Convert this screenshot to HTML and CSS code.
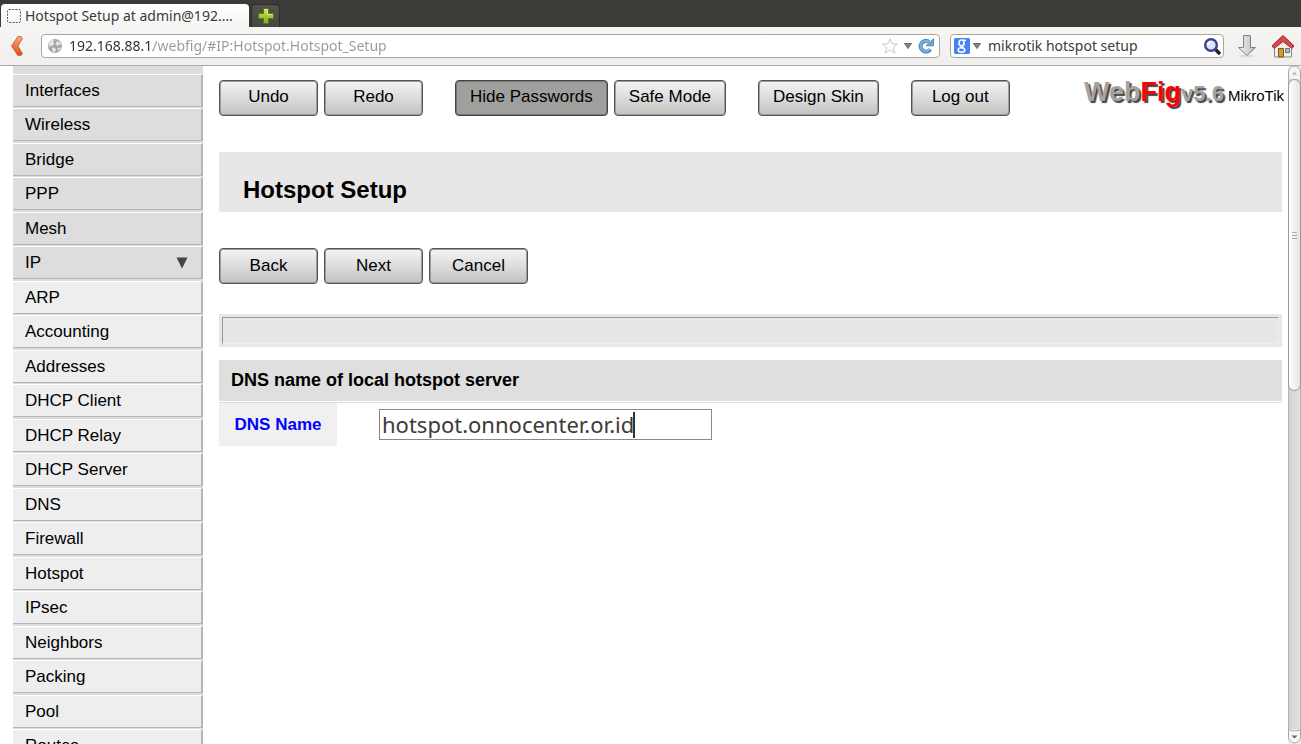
FILE: index.html
```html
<!DOCTYPE html>
<html lang="en">
<head>
<meta charset="utf-8">
<title>Hotspot Setup at admin@192.168.88.1</title>
<link rel="stylesheet" href="styles.css">
</head>
<body>
<div class="browser">
  <div class="tabs">
    <button class="tab" type="button">
      <svg width="14" height="14" viewBox="0 0 14 14"><rect x=".5" y=".5" width="13" height="13" rx="1.5" fill="none" stroke="#555" stroke-dasharray="2 1.2"/></svg>
      <span>Hotspot Setup at admin@192.…</span>
    </button>
    <button class="new-tab" type="button" aria-label="New tab">
      <svg width="16" height="16" viewBox="0 0 16 16"><defs><linearGradient id="plus" x2="0" y2="1"><stop stop-color="#d3e25c"/><stop offset="1" stop-color="#7fae1c"/></linearGradient></defs><path d="M5.5 .5h5v5h5v5h-5v5h-5v-5h-5v-5h5z" fill="url(#plus)" stroke="#4e7d12"/><path d="M6.5 1.5h3v5h5" fill="none" stroke="#eaf3a0" stroke-opacity=".8"/></svg>
    </button>
  </div>
  <div class="toolbar">
    <button class="tool back" type="button" aria-label="Go back">
      <svg width="14" height="22" viewBox="0 0 14 22"><defs><linearGradient id="arrow" x2="0" y2="1"><stop stop-color="#f7ad72"/><stop offset="1" stop-color="#e04a1c"/></linearGradient></defs><path d="M7.8 1.5 1.5 11l6.300 9.500h3.200l1.500-1.800L8 11l4.500-7.700L11 1.500z" fill="url(#arrow)" stroke="#c9592c" stroke-width=".8"/></svg>
    </button>
    <div class="field address">
      <svg width="16" height="16" viewBox="0 0 16 16"><circle cx="8" cy="8" r="7" fill="#a5a5a5"/><path d="M2 5 4.500 2l3 .2L6 4l1.500 1.500L5.500 8 4 7.500 2 9zM10 3l3 1 1.500 3-2.500-.5-1.500 1.500-2-2zM5 9.500l3 .5 1 1.500-1.500 3-2-1zM10.500 10l2.500-.5 1 1-2.500 2.500z" fill="#e4e4e4"/></svg>
      <input class="text url" type="text" aria-label="Address" value="192.168.88.1/webfig/#IP:Hotspot.Hotspot_Setup">
      <svg width="16" height="16" viewBox="0 0 16 16"><path d="m8 .8 2.100 5 5.400.3-4.200 3.500 1.400 5.400L8 12l-4.700 3 1.400-5.400L.5 6.100l5.400-.3z" fill="#fff" stroke="#c8c8c8"/></svg>
      <svg class="down" width="8" height="6" viewBox="0 0 8 6"><path d="M.5.5h7L4 5.500z" fill="#888" stroke="#666"/></svg>
      <svg width="16" height="16" viewBox="0 0 16 16"><path d="M12.300 11.300A5.300 5.300 0 1 1 11 3.900" fill="none" stroke="#3f7fb6" stroke-width="4"/><path d="M15.500.7v7.100H8z" fill="#6fa8d8" stroke="#3f7fb6" stroke-width=".8"/><path d="M12 11.200A5.200 5.200 0 1 1 10.900 4" fill="none" stroke="#7db2df" stroke-width="2.200"/></svg>
    </div>
    <div class="field search">
      <svg width="16" height="16" viewBox="0 0 16 16"><rect width="16" height="16" rx="1.500" fill="#4683f5"/><ellipse cx="7.500" cy="5" rx="2.500" ry="3" fill="none" stroke="#fff" stroke-width="1.700"/><path d="M9 2.200h3M8 8c-2 1 .5 1.700 2 2.500" fill="none" stroke="#fff" stroke-width="1.500"/><ellipse cx="7.500" cy="12" rx="3.300" ry="2.200" fill="none" stroke="#fff" stroke-width="1.500"/></svg>
      <svg class="down" width="8" height="6" viewBox="0 0 8 6"><path d="M.5.5h7L4 5.500z" fill="#888" stroke="#666"/></svg>
      <input class="text" type="text" aria-label="Search" value="mikrotik hotspot setup">
      <svg width="18" height="18" viewBox="0 0 18 18"><path d="m12.500 12.500 3.500 3.500" stroke="#222" stroke-width="3.500" stroke-linecap="round"/><circle cx="8" cy="8" r="5.800" fill="#dfe6fb" stroke="#36448e" stroke-width="2.400"/><path d="M5 8a3 3 0 0 1 3-3" stroke="#fff" stroke-width="1.500" fill="none"/></svg>
    </div>
    <button class="tool download" type="button" aria-label="Downloads">
      <svg width="20" height="24" viewBox="0 0 20 24"><defs><linearGradient id="dl" x2="1" y2="0"><stop stop-color="#f2f4f4"/><stop offset="1" stop-color="#b4babc"/></linearGradient></defs><ellipse cx="10" cy="22" rx="8" ry="1.500" fill="#dcdcda"/><path d="M6.500 1.500h7v12h5L10 21.500l-8.500-8h5z" fill="url(#dl)" stroke="#7f8587"/></svg>
    </button>
    <button class="tool home" type="button" aria-label="Home">
      <svg width="24" height="24" viewBox="0 0 24 24"><path d="M3.500 11v12h17V11L12 4z" fill="#f1f0e8" stroke="#8a8a82"/><path d="m12 1.500 11 10.300-2 2.700-9-7-9 7-2-2.700z" fill="#d9474b" stroke="#a32b2e"/><path d="M7.500 14.500h5V23h-5z" fill="#d79a2b" stroke="#7c5718"/><path d="M14.500 14.500h4v4h-4z" fill="#a9bdc9" stroke="#66757d"/></svg>
    </button>
  </div>
  <div class="page">
    <nav class="sidebar" aria-label="Menu">
      <ul>
        <li><a href="#interfaces">Interfaces</a></li>
        <li><a href="#wireless">Wireless</a></li>
        <li><a href="#bridge">Bridge</a></li>
        <li><a href="#ppp">PPP</a></li>
        <li><a href="#mesh">Mesh</a></li>
        <li><a href="#ip">IP <svg width="12" height="12" viewBox="0 0 12 12"><path d="M.5.5h11L6 11.500z" fill="#444"/></svg></a></li>
        <li class="sub"><a href="#arp">ARP</a></li>
        <li class="sub"><a href="#accounting">Accounting</a></li>
        <li class="sub"><a href="#addresses">Addresses</a></li>
        <li class="sub"><a href="#dhcp-client">DHCP Client</a></li>
        <li class="sub"><a href="#dhcp-relay">DHCP Relay</a></li>
        <li class="sub"><a href="#dhcp-server">DHCP Server</a></li>
        <li class="sub"><a href="#dns">DNS</a></li>
        <li class="sub"><a href="#firewall">Firewall</a></li>
        <li class="sub"><a href="#hotspot">Hotspot</a></li>
        <li class="sub"><a href="#ipsec">IPsec</a></li>
        <li class="sub"><a href="#neighbors">Neighbors</a></li>
        <li class="sub"><a href="#packing">Packing</a></li>
        <li class="sub"><a href="#pool">Pool</a></li>
        <li class="sub"><a href="#routes">Routes</a></li>
      </ul>
    </nav>
    <main class="content">
      <header class="top">
        <div class="groups">
          <div class="buttons"><button class="btn" type="button">Undo</button><button class="btn" type="button">Redo</button></div>
          <div class="buttons"><button class="btn pressed" type="button">Hide Passwords</button><button class="btn" type="button">Safe Mode</button></div>
          <div class="buttons"><button class="btn" type="button">Design Skin</button></div>
          <div class="buttons"><button class="btn" type="button">Log out</button></div>
        </div>
        <div class="brand"><span class="web">Web</span><span class="fig">Fig</span><span class="version">v5.6</span><span class="vendor">MikroTik</span></div>
      </header>
      <h1 class="title">Hotspot Setup</h1>
      <div class="buttons wizard"><button class="btn" type="button">Back</button><button class="btn" type="button">Next</button><button class="btn" type="button">Cancel</button></div>
      <div class="status"><div class="status-well"></div></div>
      <h2 class="section">DNS name of local hotspot server</h2>
      <div class="row">
        <label class="name" for="dns-name">DNS Name</label>
        <div class="value"><input id="dns-name" class="dns" type="text" value="hotspot.onnocenter.or.id"><span class="caret"></span></div>
      </div>
    </main>
    <div class="scrollbar">
      <svg class="cap" width="13" height="13" viewBox="0 0 13 13"><path d="M.5 13V6a6 6 0 0 1 12 0v7" fill="#f5f4f3" stroke="#aaa69f"/><path d="M4 8.500h5L6.500 6z" fill="#aaa"/></svg>
      <div class="track"><div class="thumb"><span class="grip"></span></div></div>
      <svg class="cap" width="13" height="15" viewBox="0 0 13 15"><path d="M.5 0v8a6 6 0 0 0 12 0V0c-2 2.500-10 2.500-12 0z" fill="#f8f8f7" stroke="#aaa69f"/><path d="M3.500 6.500h6l-3 3z" fill="#666"/></svg>
    </div>
  </div>
</div>
</body>
</html>
```
FILE: styles.css
```css
* { box-sizing: border-box; }
body { margin: 0; background: #fff; color: #000; font: 17px/20px "Liberation Sans", Arial, sans-serif; }
button, input { font: inherit; color: inherit; margin: 0; }
svg { display: block; flex: none; }
.browser { display: flex; flex-direction: column; height: 100vh; overflow: hidden; }

.tabs, .toolbar { font: 14px/20px "Noto Sans", "Open Sans", sans-serif; color: #3c3b37; flex: none; }
.tabs { display: flex; gap: 2px; padding: 4px 1px 0; height: 27px; background: #3c3b37; }
.tab { display: flex; align-items: center; gap: 4px; width: 248px; padding: 0 6px; border: 0; border-radius: 4px 4px 0 0; background: linear-gradient(#fff, #f5f4f3); white-space: nowrap; }
.new-tab { display: grid; place-items: center; width: 29px; padding: 0; border: 1px solid #2c2b28; border-bottom: 0; border-radius: 4px 4px 0 0; background: linear-gradient(#53524d, #474641); }

.toolbar { display: flex; align-items: center; height: 39px; padding: 0 6px 0 10px; border-bottom: 1px solid #aeaca5; background: linear-gradient(#f6f5f4, #f0efed); }
.tool { padding: 0; border: 0; background: none; }
.back { margin-right: 17px; }
.download { margin: 0 14px 0 13px; }
.field { display: flex; align-items: center; gap: 6px; height: 24px; padding: 0 5px; border: 1px solid #a9a79e; border-radius: 4px; background: #fff; }
.address { flex: 1; margin-right: 10px; }
.search { width: 274px; padding: 0 2px 0 3px; gap: 3px; }
.text { flex: 1; min-width: 0; height: 20px; padding: 0; border: 0; outline: 0; background: none; }
.search .text { padding-left: 4px; }
.url { color: #999; background: linear-gradient(90deg, #2e2e2e 84px, #999 84px); background-clip: text; -webkit-background-clip: text; -webkit-text-fill-color: transparent; }

.page { display: flex; flex: 1; min-height: 0; }
.sidebar { flex: none; width: 203px; padding-left: 13px; overflow: hidden; }
.sidebar ul { margin: 0; padding: 8px 0 0; list-style: none; background: #ddd; }
.sidebar li { height: 34px; padding-bottom: 1px; background: #ddd; }
.sidebar li:nth-child(even) { height: 35px; padding-bottom: 2px; }
.sidebar a { display: flex; align-items: center; justify-content: space-between; height: 33px; padding: 0 13px 0 12px; border-top: 1px solid #fff; border-bottom: 1px solid #b5b5b5; border-right: 2px solid #b5b5b5; background: #ddd; color: #000; text-decoration: none; }
.sidebar .sub a { background: #eee; }

.content { flex: 1; min-width: 0; padding: 14px 6px 0 16px; }
.top { display: flex; justify-content: space-between; align-items: flex-start; margin-right: -2px; }
.groups { display: flex; gap: 32px; }
.buttons { display: flex; gap: 6px; }
.btn { min-width: 99px; height: 36px; padding: 0 14px 2px; border: 1px solid #555; border-radius: 4px; background: linear-gradient(#f4f5f4, #dcdcdc 50%, #c2c2c1); box-shadow: inset 0 0 0 1px #9c9c9c; }
.wizard .btn { padding-bottom: 0; }
.pressed { background: #9f9f9d; border-color: #444; box-shadow: inset 0 0 0 1px #777; }
.brand { display: flex; align-items: baseline; font-weight: bold; white-space: nowrap; line-height: 24px; }
.web, .fig { font-size: 27px; }
.web, .version { color: #a3a3a3; text-shadow: 2px 2px 1px #444; }
.fig { color: #f00; text-shadow: 2px 2px 1px #444; }
.version { font-size: 22px; }
.vendor { margin-left: 4px; font-size: 15px; font-weight: normal; }
.title { margin: 36px 0; padding: 24px 24px 8px; background: #e7e7e7; font-size: 24px; line-height: 28px; }
.status { margin: 30px 0 13px; padding: 3px; background: #e7e7e7; }
.status-well { height: 27px; border: 1px solid #eee; border-top-color: #999; border-left-color: #999; }
.section { margin: 0 0 1px; padding: 10px 12px 11px; background: #dfdfdf; font-size: 18px; line-height: 20px; }
.row { display: flex; align-items: stretch; gap: 42px; border-top: 1px solid #ddd; }
.name { display: flex; align-items: center; justify-content: center; width: 118px; height: 43px; background: #f0f0f0; color: #00f; font-weight: bold; }
.value { position: relative; display: flex; align-items: center; }
.dns { width: 333px; height: 31px; padding: 0 2px 2px; border: 1px solid #888; background: #fff; color: #3c3b37; font: 22px/28px "Noto Sans", "Open Sans", sans-serif; outline: 0; }
.caret { position: absolute; left: 254px; top: 9px; width: 2px; height: 26px; background: #333; }

.scrollbar { display: flex; flex-direction: column; flex: none; width: 13px; background: #f0efee; }
.track { flex: 1; border: 1px solid #b5b2ad; border-width: 0 1px; background: linear-gradient(90deg, #d3d2d0, #e2e1df); }
.thumb { display: grid; place-items: center; height: 48%; margin: 0 -1px; border: 1px solid #9b9892; border-radius: 7px; background: linear-gradient(90deg, #fff, #e5e4e2); }
.grip { width: 5px; height: 7px; background: repeating-linear-gradient(#aaa 0 1px, transparent 1px 3px); }
```
